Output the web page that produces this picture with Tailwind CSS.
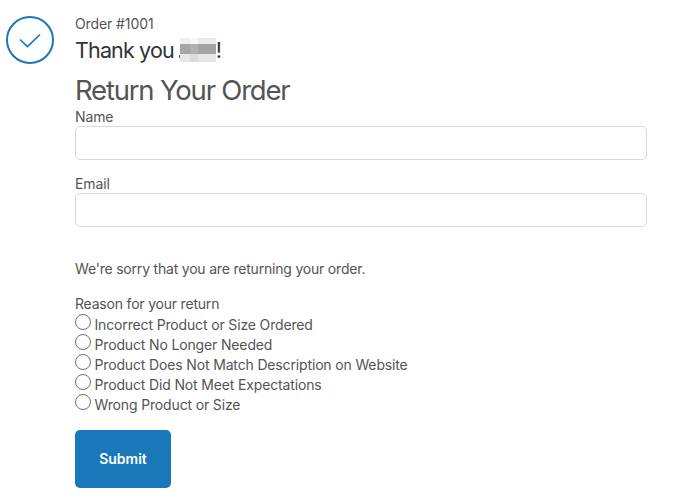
<!DOCTYPE html>
<html>
<head>
<meta charset="utf-8">
<script src="https://cdn.jsdelivr.net/npm/@tailwindcss/browser@4"></script>
</head>
<body class="bg-white font-['Inter',sans-serif] text-[#545454] h-[502px] overflow-hidden">
<div class="flex pl-[6px] pt-[16px] gap-[21px]">
  <svg class="w-12 h-12 shrink-0" viewBox="0 0 48 48" fill="none">
    <circle cx="24" cy="24" r="23" stroke="#1878b9" stroke-width="2"/>
    <path d="M14 23.5L21.5 30.5L34 18.5" stroke="#1878b9" stroke-width="1.7"/>
  </svg>
  <div class="w-[572px] -mt-[1px]">
    <p class="text-[14px] leading-[17px] tracking-[-0.1px]">Order #1001</p>
    <h2 class="mt-[4px] flex items-center text-[21.5px] leading-[28px] tracking-[-0.85px] text-[#333333]">Thank you<span class="relative ml-[6px] grid grid-cols-[10px_8px_18px] grid-rows-[6px_10px_8px] w-[36px] h-[24px]">
      <span class="bg-[#efefef]"></span><span class="bg-[#f7f7f7]"></span><span class="bg-[#ebebeb]"></span>
      <span class="bg-[#a5a5a5]"></span><span class="bg-[#b0b0b0]"></span><span class="bg-[#a3a3a3]"></span>
      <span class="bg-[#e8e8e8]"></span><span class="bg-[#dcdcdc]"></span><span class="bg-[#e6e6e6]"></span>
      <span class="absolute -left-[1px] top-[17px] w-[1px] h-[3px] bg-[#555555]"></span>
    </span>!</h2>
    <h1 class="mt-[9px] text-[27.5px] leading-[34px] tracking-[-1.2px]">Return Your Order</h1>
    <label class="block text-[14px] leading-[17px] tracking-[-0.1px] mt-[1px]">Name</label>
    <div class="mt-[1px] h-[34px] rounded-[5px] border border-[#d9d9d9] bg-white"></div>
    <label class="block text-[14px] leading-[17px] tracking-[-0.1px] mt-[15px]">Email</label>
    <div class="mt-[1px] h-[34px] rounded-[5px] border border-[#d9d9d9] bg-white"></div>
    <p class="mt-[33px] text-[14px] leading-[17px] tracking-[-0.2px]">We're sorry that you are returning your order.</p>
    <p class="mt-[18px] text-[14px] leading-[17px] tracking-[-0.2px]">Reason for your return</p>
    <div class="flex flex-col text-[14px] leading-[20px] tracking-[-0.15px] mt-[2px]">
      <label class="flex items-start gap-[3.5px] h-[20px]"><span class="w-4 h-4 rounded-full border border-[#6f6f6f] bg-white shrink-0"></span><span class="pt-[1px]">Incorrect Product or Size Ordered</span></label>
      <label class="flex items-start gap-[3.5px] h-[20px]"><span class="w-4 h-4 rounded-full border border-[#6f6f6f] bg-white shrink-0"></span><span class="pt-[1px]">Product No Longer Needed</span></label>
      <label class="flex items-start gap-[3.5px] h-[20px]"><span class="w-4 h-4 rounded-full border border-[#6f6f6f] bg-white shrink-0"></span><span class="pt-[1px]">Product Does Not Match Description on Website</span></label>
      <label class="flex items-start gap-[3.5px] h-[20px]"><span class="w-4 h-4 rounded-full border border-[#6f6f6f] bg-white shrink-0"></span><span class="pt-[1px]">Product Did Not Meet Expectations</span></label>
      <label class="flex items-start gap-[3.5px] h-[20px]"><span class="w-4 h-4 rounded-full border border-[#6f6f6f] bg-white shrink-0"></span><span class="pt-[1px]">Wrong Product or Size</span></label>
    </div>
    <button class="mt-[16px] w-[96px] h-[58px] pb-[2px] rounded-[5px] bg-[#1878b9] text-white text-[14px] font-semibold">Submit</button>
  </div>
</div>
</body>
</html>
